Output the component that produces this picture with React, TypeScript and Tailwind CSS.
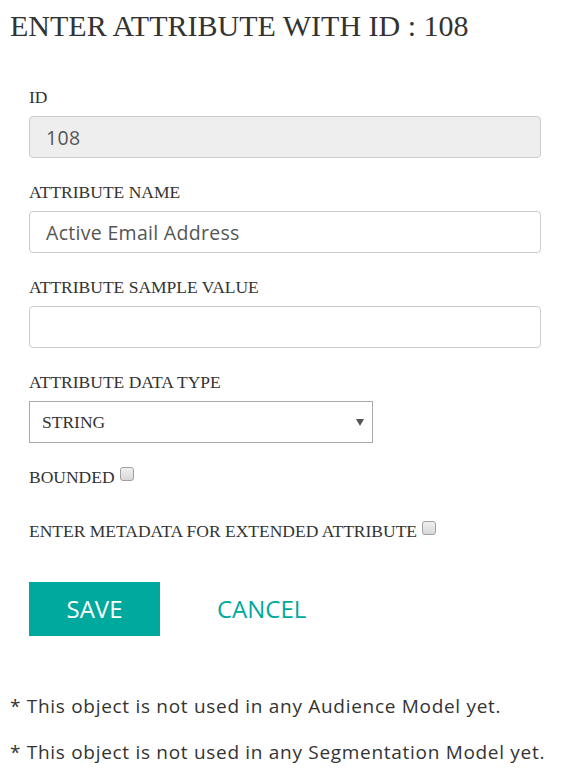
import React from 'react';

const serif = "font-['Liberation_Serif','Times_New_Roman',serif]";
const sans = "font-['Open_Sans','Noto_Sans',sans-serif]";

function Field({ label, value, disabled }: { label: string; value?: string; disabled?: boolean }) {
  return (
    <div className="mb-[24px]">
      <label className={`${serif} block text-[17.5px] leading-[20px] text-[#333] mb-[9px]`}>{label}</label>
      <input
        readOnly
        value={value ?? ''}
        className={`${sans} block w-full h-[42px] px-[16px] text-[19.5px] tracking-[0.3px] text-[#555] border border-[#ccc] rounded-[4px] ${
          disabled ? 'bg-[#eee]' : 'bg-white'
        }`}
      />
    </div>
  );
}

function Checkbox() {
  return <span className="ml-[5px] w-[14px] h-[14px] rounded-[3px] border border-[#a0a0a0] bg-gradient-to-b from-[#f0f0f0] to-[#d8d8d8]" />;
}

export default function App() {
  return (
    <div className="min-h-screen bg-white text-[#333]">
      <h1 className={`${serif} pl-[10px] pt-[8px] text-[30px] leading-[36px] text-[#333]`}>
        ENTER ATTRIBUTE WITH ID : 108
      </h1>

      <form className="pl-[29px] pr-[26px] pt-[43px]">
        <Field label="ID" value="108" disabled />
        <Field label="ATTRIBUTE NAME" value="Active Email Address" />
        <Field label="ATTRIBUTE SAMPLE VALUE" />

        <label className={`${serif} block text-[17.5px] leading-[20px] text-[#333] mb-[9px]`}>
          ATTRIBUTE DATA TYPE
        </label>
        <div className="relative w-[344px] h-[42px] border border-[#aaa] bg-white flex items-center">
          <span className={`${serif} pl-[12px] text-[17.5px] text-[#333]`}>STRING</span>
          <span className="absolute right-[8px] top-[17px] w-0 h-0 border-l-[4px] border-r-[4px] border-t-[7px] border-l-transparent border-r-transparent border-t-[#555]" />
        </div>

        <div className={`${serif} mt-[24px] flex items-start text-[17.5px] leading-[20px]`}>
          <span>BOUNDED</span>
          <Checkbox />
        </div>

        <div className={`${serif} mt-[34px] flex items-start text-[17.5px] leading-[20px]`}>
          <span>ENTER METADATA FOR EXTENDED ATTRIBUTE</span>
          <Checkbox />
        </div>

        <div className={`${sans} mt-[41px] flex items-center`}>
          <button
            type="button"
            className="w-[131px] h-[54px] bg-[#00a99d] text-white text-[24px] leading-none"
          >
            SAVE
          </button>
          <button type="button" className="ml-[57px] text-[#00a99d] text-[24px] leading-none">
            CANCEL
          </button>
        </div>
      </form>

      <div className={`${sans} pl-[10px] mt-[58px] text-[19px] leading-[24px] tracking-[0.7px] text-[#333]`}>
        <p>* This object is not used in any Audience Model yet.</p>
        <p className="mt-[22px]">* This object is not used in any Segmentation Model yet.</p>
      </div>
    </div>
  );
}
